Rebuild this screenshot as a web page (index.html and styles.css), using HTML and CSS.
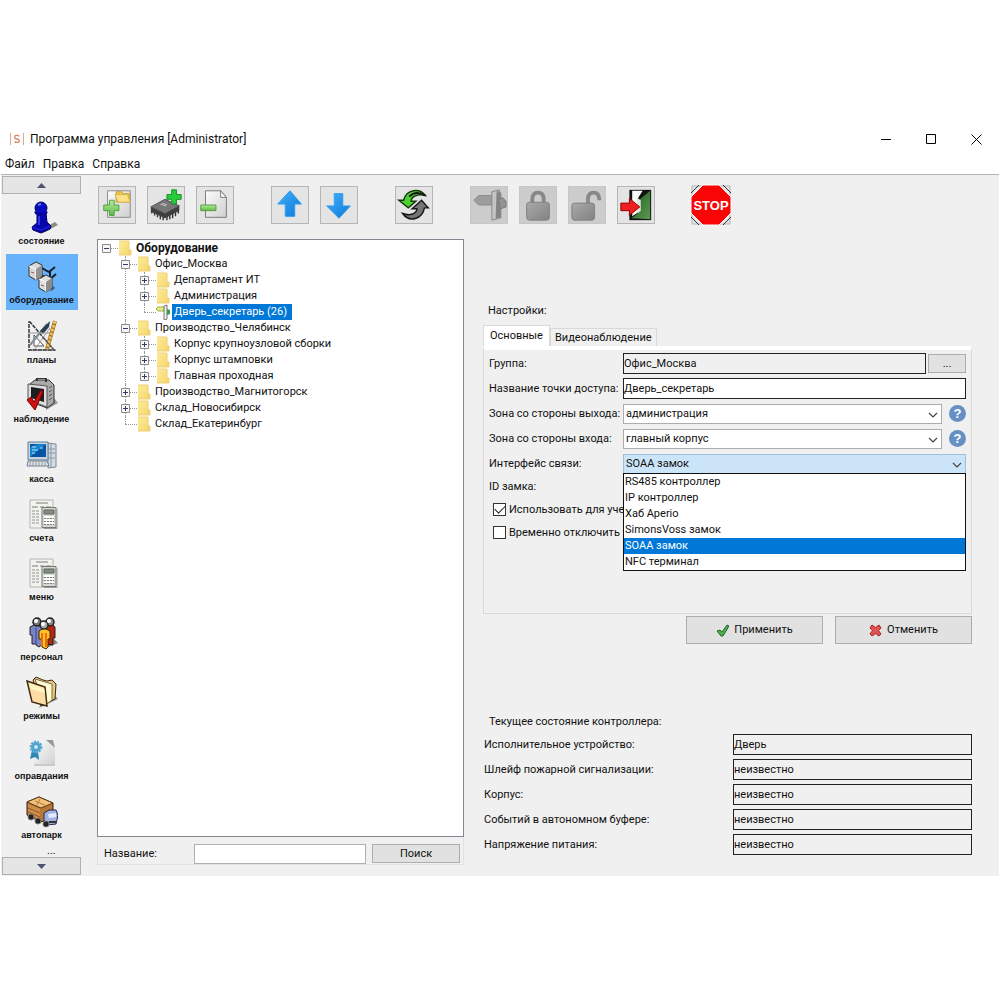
FILE: index.html
```html
<!DOCTYPE html>
<html lang="ru">
<head>
<meta charset="utf-8">
<title>Программа управления [Administrator]</title>
<link rel="stylesheet" href="styles.css">
</head>
<body>
<svg class="defs" width="0" height="0" aria-hidden="true">
  <defs>
    <linearGradient id="g-page" x1="0" y1="0" x2="1" y2="1"><stop offset="0" stop-color="#fdfdfd"/><stop offset="1" stop-color="#cfcfcf"/></linearGradient>
    <linearGradient id="g-green" x1="0" y1="0" x2="0" y2="1"><stop offset="0" stop-color="#b4eb9c"/><stop offset="1" stop-color="#5cbb48"/></linearGradient>
    <linearGradient id="g-blue" x1="0" y1="0" x2="1" y2="1"><stop offset="0" stop-color="#45b0fb"/><stop offset="1" stop-color="#0a78d8"/></linearGradient>
    <linearGradient id="g-gray" x1="0" y1="0" x2="1" y2="1"><stop offset="0" stop-color="#a9a9a9"/><stop offset="1" stop-color="#828282"/></linearGradient>
    <linearGradient id="g-door" x1="0" y1="0" x2="1" y2="1"><stop offset="0" stop-color="#1c5a22"/><stop offset="1" stop-color="#5c9a50"/></linearGradient>
    <linearGradient id="g-folder" x1="0" y1="0" x2="1" y2="1"><stop offset="0" stop-color="#fdeb9c"/><stop offset="1" stop-color="#f6d766"/></linearGradient>
    <symbol id="folder" viewBox="0 0 14 16">
      <path d="M1 1h10v9h2v5H1z" fill="url(#g-folder)"/>
      <path d="M1 1h10v9M1 15h12v-5h-2v5" fill="none" stroke="#ecd078"/>
    </symbol>
    <symbol id="chevron" viewBox="0 0 10 6"><path d="M1 1l4 4 4-4" fill="none" stroke="#444" stroke-width="1.2"/></symbol>
    <symbol id="plus" viewBox="0 0 9 9"><path d="M.5.5h8v8h-8z" fill="#f6f6f6" stroke="#8a8a8a"/><path d="M2 4.500h5M4.500 2v5" stroke="#333a6a"/></symbol>
    <symbol id="minus" viewBox="0 0 9 9"><path d="M.5.5h8v8h-8z" fill="#f6f6f6" stroke="#8a8a8a"/><path d="M2 4.500h5" stroke="#333a6a"/></symbol>
    <symbol id="bill" viewBox="0 0 32 34">
      <path d="M4 3h23v28H4z" fill="#f2f2ee" stroke="#b4b6b0"/>
      <path d="M10 6h12M6 10h6M14 10h4M20 10h5" stroke="#b5b8b2" stroke-width="2"/>
      <path d="M6 14h8M6 17h8M6 20h8M6 23h8M6 26h8" stroke="#bfc2bd" stroke-width="2" stroke-dasharray="3 1"/>
      <path d="M16 10.500h14v20H16z" fill="#d5d8d2" stroke="#747a72"/>
      <path d="M18 13h10v4H18z" fill="#84907f" stroke="#5c665a"/>
      <path d="M18 20h10M18 23h10M18 26h10" stroke="#fff" stroke-width="2"/>
      <path d="M18 21.500h10M18 24.500h10M18 27.500h10" stroke="#7a8078" stroke-dasharray="2 1"/>
      <path d="M18 31.500h13V12" fill="none" stroke="#999"/>
    </symbol>
  </defs>
</svg>

<div class="window">
  <header class="titlebar">
    <svg class="logo" width="16" height="14" viewBox="0 0 16 14" aria-hidden="true"><path d="M1.500 1v12M14.500 1v12" stroke="#e0a68c"/><path d="M10.500 4Q6 2.500 5.800 4.800T8 7q2.600.5 2.200 2.300T5.500 10" fill="none" stroke="#d4835f" stroke-width="1.300"/></svg>
    <h1>Программа управления [Administrator]</h1>
    <div class="controls">
      <button aria-label="Свернуть"><svg width="11" height="11" viewBox="0 0 11 11"><path d="M0 5.500h10" stroke="#000"/></svg></button>
      <button aria-label="Развернуть"><svg width="11" height="11" viewBox="0 0 11 11"><path d="M.5.5h9v9h-9z" fill="none" stroke="#000"/></svg></button>
      <button aria-label="Закрыть"><svg width="11" height="11" viewBox="0 0 11 11"><path d="M.5.5l10 10M10.500.5l-10 10" stroke="#000"/></svg></button>
    </div>
  </header>
  <nav class="menubar"><a href="#">Файл</a><a href="#">Правка</a><a href="#">Справка</a></nav>

  <div class="body">
    <aside class="sidebar">
      <button class="scroll" aria-label="Вверх"><svg width="9" height="5" viewBox="0 0 9 5"><path d="M0 5L4.500 0 9 5z" fill="#4c5472"/></svg></button>
      <nav class="modules">
        <a href="#"><svg viewBox="0 0 32 34"><path d="M17 33L32 25l-3-3-9 5z" fill="#8e8e80"/><path d="M11 13h9l1 9 4 4-1 3-9 4-8-3-1-3 5-4z" fill="#0707ad" stroke="#000060"/><path d="M6 27l9 3 9-4M8 12l8 3 6-3" fill="none" stroke="#2929e8"/><circle cx="15" cy="8" r="6" fill="#0a0ac0" stroke="#000060"/><path d="M9 11l6 3 6-3v3l-6 2-6-2z" fill="#0404a0"/><path d="M12 5l3-1" stroke="#5b7bff" stroke-width="2"/><path d="M13 16v9" stroke="#3434f0" stroke-width="2"/></svg>состояние</a>
        <a href="#" class="current"><svg viewBox="0 0 32 34"><path d="M14 8l9 5 6-5M14 15l9 6 7-6M24 12v8" fill="none" stroke="#14202c" stroke-width="2"/><path d="M3 7l7-4 6 3v11l-6 4-7-4z" fill="#d9d9d9" stroke="#333"/><path d="M3 7l7 3v11" fill="none" stroke="#fff"/><path d="M10 10l6-4v11l-6 4z" fill="#929292"/><path d="M13 20l7-4 6 3v10l-6 4-7-4z" fill="#dedede" stroke="#333"/><path d="M13 20l7 3v10" fill="none" stroke="#fff"/><path d="M20 23l6-4v10l-6 4z" fill="#8c8c8c"/><path d="M5 13l3 1M15 26l3 1" stroke="#a35252"/><path d="M24 33l5-4-2-2z" fill="#345878"/></svg>оборудование</a>
        <a href="#"><svg viewBox="0 0 32 34"><path d="M3 3h1l24 28H3z" fill="none" stroke="#333" stroke-width="1.500" stroke-dasharray="4 1"/><path d="M8 16l10 11H8z" fill="#fff" stroke="#555"/><path d="M21 5L4 26" stroke="#7d8d99" stroke-width="2"/><path d="M24 2l-1 6-6 7-3-3z" fill="#254057"/><path d="M2 14h24M9 30L24 9" stroke="#999"/><path d="M29 2l-8 28" stroke="#8e671f" stroke-width="4"/><path d="M29 2l-8 28" stroke="#edbd5a" stroke-width="3" stroke-dasharray="3 1"/><path d="M17 18l11 13M2 31h28" stroke="#555"/></svg>планы</a>
        <a href="#"><svg viewBox="0 0 32 34"><path d="M20 32l12-7-4-5-8 5z" fill="#9a9a92"/><path d="M4 6l5-4h14l5 5v18l-7 5L3 23z" fill="#aaa" stroke="#333"/><path d="M11 3V0h9v4" fill="none" stroke="#333" stroke-width="2"/><path d="M2 6l19 2v21L2 22z" fill="#ddd" stroke="#555"/><path d="M5 9l13 2v13L5 20z" fill="#1d1d22"/><path d="M23 10l3-2M23 14l3-2M23 18l3-2M23 22l3-2" stroke="#555"/><path d="M1 22l4-3 3 5L15 12l2 2-8 18z" fill="#d01010" stroke="#700"/></svg>наблюдение</a>
        <a href="#"><svg viewBox="0 0 32 34"><path d="M22 5l8 1v23l-8 1z" fill="#d4dbe3" stroke="#7c8a98"/><path d="M25 6v23M23 11h6M23 15h6M23 20h6" stroke="#8897a6"/><path d="M2 4h20v18H2z" fill="#c7d4df" stroke="#657d92"/><path d="M4 6h16v13H4z" fill="#0754a2"/><path d="M4 19V9l8-3h8z" fill="#1684cd"/><path d="M6 9h4M6 12h6M6 15h3M14 10h3" stroke="#b8e1ff"/><path d="M2 23h19l2 5H1z" fill="#e0e4e8" stroke="#708090"/><path d="M3 25h17M3 27h18" stroke="#8d9aa6" stroke-dasharray="2 1"/></svg>касса</a>
        <a href="#"><svg><use href="#bill"/></svg>счета</a>
        <a href="#"><svg><use href="#bill"/></svg>меню</a>
        <a href="#"><svg viewBox="0 0 32 34"><path d="M20 32l12-5-5-5z" fill="#88887c"/><path d="M4 11l6-3 7 4v16l-4 3-3-2v-1H6V19H4z" fill="#7784c5" stroke="#222"/><path d="M20 10l6-2 3 3v11h-2v7l-7-1z" fill="#b62711" stroke="#222"/><path d="M13 15l5-3 6 3v8h-2v8l-2 2-4-2v-8h-3z" fill="#ffc22b" stroke="#3c2600"/><path d="M16 17v13M20 17v14" stroke="#f06c08" stroke-width="2"/><circle cx="11" cy="6" r="4" fill="#777" stroke="#222" stroke-width="1.500"/><circle cx="24" cy="6" r="4" fill="#888" stroke="#222" stroke-width="1.500"/><circle cx="18" cy="9" r="4" fill="#aaa" stroke="#222" stroke-width="1.500"/><circle cx="10" cy="5" r="2" fill="#fff"/><circle cx="23" cy="5" r="2" fill="#fff"/><circle cx="17" cy="8" r="2" fill="#fff"/><path d="M10 12v16" stroke="#3a4690"/></svg>персонал</a>
        <a href="#"><svg viewBox="0 0 32 34"><path d="M13 33l19-9-4-5-12 6z" fill="#9a9a8f"/><path d="M7 5l3-3 7 3 4 1 5-1 4 4-1 15-14 7z" fill="#e8c887" stroke="#3b2b12"/><path d="M9 4l17 5v16l-8 6z" fill="#fffbd5" stroke="#7d6b40"/><path d="M1 6l18 6 2 19L6 27z" fill="#ffdca5" stroke="#3b2b12" stroke-width="1.500"/><path d="M3 8l15 6 1 4-14-4z" fill="#fff7bd"/></svg>режимы</a>
        <a href="#"><svg viewBox="0 0 32 34"><path d="M8 6h13l8 8v17H8z" fill="url(#g-page)"/><path d="M8 29h21v2H8z" fill="#c8cacb"/><path d="M20 5l9 8-2-8z" fill="#92989c"/><path d="M6 15L4 24l5-2 4 3-1-10z" fill="#2f86b3"/><circle cx="10" cy="12" r="5" fill="#4ba2cb" stroke="#5fabd0" stroke-width="3" stroke-dasharray="2 1"/><circle cx="10" cy="12" r="2" fill="#c9e8f4"/></svg>оправдания</a>
        <a href="#"><svg viewBox="0 0 32 34"><path d="M1 8l12-5 14 6v15L15 28 1 21z" fill="#b77836" stroke="#34200c"/><path d="M1 8l14 6 12-5-14-6z" fill="#f3c27a" stroke="#5b3814"/><path d="M9 7l10 4M14 5l-3 6" stroke="#b57b3e"/><path d="M2 10l12 5v11L2 20z" fill="#cf8d49"/><path d="M2 14l12 5M2 18l12 5" stroke="#8f5928"/><path d="M18 19l5-3h7l2 5-2 9-9 1-3-4z" fill="#a3b2e2" stroke="#222b4b"/><path d="M22 20l8-1v4l-7 1z" fill="#e2edff"/><path d="M23 28h7" stroke="#333" stroke-width="2"/><circle cx="5" cy="23" r="3" fill="#222" stroke="#777"/><circle cx="12" cy="27" r="3" fill="#222" stroke="#777"/><circle cx="20" cy="30" r="3" fill="#222" stroke="#777"/></svg>автопарк</a>
      </nav>
      <div class="more">...</div>
      <button class="scroll" aria-label="Вниз"><svg width="9" height="5" viewBox="0 0 9 5"><path d="M0 0l4.500 5L9 0z" fill="#4c5472"/></svg></button>
    </aside>

    <main class="main">
      <div class="toolbar">
        <div class="group">
          <button class="tool" aria-label="Добавить группу"><svg viewBox="0 0 38 38"><path d="M9 4h24v28H9z" fill="url(#g-page)" stroke="#888"/><path d="M18 5h6l2 2h6v9H18z" fill="#ecc94e" stroke="#c2a03a"/><path d="M17 8h13l3 8H20z" fill="#fbe287" stroke="#d4b350"/><path d="M11 14h5v5h5v6h-5v5h-5v-5H5v-6h6z" fill="url(#g-green)" stroke="#4e9c3e"/></svg></button>
          <button class="tool" aria-label="Добавить устройство"><svg viewBox="0 0 38 38"><path d="M4 22v6M7 24v6M10 26v6M13 28v6M16 30v5M20 30v5M23 28v6M26 27v6M29 25v6M32 22v6" stroke="#333" stroke-width="1.500"/><path d="M3 21v5l15 7 15-8v-6l-15 9z" fill="#3d3d3d"/><path d="M3 21l15-8 15 7-15 8z" fill="#767676" stroke="#4b4b4b"/><path d="M13 18l6 2M15 17l5 2" stroke="#c5c5c5"/><path d="M25 3h5v5h5v5h-5v5h-5v-5h-5V8h5z" fill="#27cc3d" stroke="#118f22"/></svg></button>
          <button class="tool" aria-label="Удалить"><svg viewBox="0 0 38 38"><path d="M9 4h16l6 7v21H9z" fill="url(#g-page)" stroke="#777"/><path d="M25 4v7h6z" fill="#fff" stroke="#777"/><path d="M4 19h16v6H4z" fill="url(#g-green)" stroke="#4e9c3e"/></svg></button>
        </div>
        <div class="group">
          <button class="tool" aria-label="Поднять"><svg viewBox="0 0 38 38"><path d="M19 4l12 14h-7v13H14V18H6z" fill="url(#g-blue)" stroke="#2f9bea"/></svg></button>
          <button class="tool" aria-label="Опустить"><svg viewBox="0 0 38 38"><path d="M14 7h9v13h8L19 33 6 20h8z" fill="url(#g-blue)" stroke="#2f9bea"/></svg></button>
        </div>
        <div class="group">
          <button class="tool" aria-label="Обновить"><svg viewBox="0 0 38 38"><path d="M31 9C25 1 11 2 8 14H3l10 8 8-7h-5c0-5 7-8 15-6z" fill="#4fd02f" stroke="#14380c" stroke-width="1.500"/><path d="M31 9c-7-4-13-3-17 1" fill="none" stroke="#111" stroke-width="2"/><path d="M7 28c7 10 21 6 23-6h4L27 14l-10 9h5c0 5-7 8-15 5z" fill="#757575" stroke="#181818" stroke-width="1.500"/></svg></button>
        </div>
        <div class="group">
          <button class="tool off" disabled aria-label="Проход"><svg viewBox="0 0 38 38"><path d="M3 14l5-5h14v10H8z" fill="#9d9d9d" stroke="#8c8c8c"/><path d="M22 5l8-2v30l-8 2z" fill="#c4c4c4" stroke="#888"/><path d="M27 4l5 2v27h-6z" fill="#858585"/><path d="M29 14l4-3 4 4v6l-6 2z" fill="#949494" stroke="#777"/></svg></button>
          <button class="tool off" disabled aria-label="Закрыть дверь"><svg viewBox="0 0 38 38"><path d="M13 18v-5q0-7 6-7t6 7v5" fill="none" stroke="#888" stroke-width="4"/><rect x="7" y="16" width="24" height="19" rx="3" fill="url(#g-gray)" stroke="#808080"/></svg></button>
          <button class="tool off" disabled aria-label="Открыть дверь"><svg viewBox="0 0 38 38"><path d="M20 18v-5q0-7 6-7t6 8" fill="none" stroke="#888" stroke-width="4"/><rect x="3" y="17" width="24" height="18" rx="3" fill="url(#g-gray)" stroke="#808080"/></svg></button>
          <button class="tool" aria-label="Выход"><svg viewBox="0 0 38 38"><path d="M12 3h23v32H12z" fill="#111"/><path d="M15 4h11l-5 8v15l-6 4z" fill="#fafafa"/><path d="M14 33l9-7V13l11-9v30z" fill="url(#g-door)"/><path d="M24 14l-3-2v16l3-3z" fill="#dfe8dd"/><path d="M3 17h9v-5l11 9-11 9v-5H3z" fill="#ef1f1f" stroke="#8f0000"/></svg></button>
        </div>
        <div class="group">
          <button class="stop" aria-label="STOP"><svg viewBox="0 0 42 42"><path d="M2 2h38v38H2z" fill="#e4e4e4" stroke="#b5b5b5"/><path d="M13 1h16l12 12v16L29 41H13L1 29V13z" fill="#f80606" stroke="#fff"/><path d="M1 9L9 1M33 1l8 8M41 33l-8 8M9 41l-8-8" stroke="#333"/><text x="21" y="26" text-anchor="middle">STOP</text></svg></button>
        </div>
      </div>

      <div class="columns">
        <section class="left">
          <div class="tree-box">
            <ul class="tree">
              <li>
                <div class="row root"><button aria-label="Свернуть"><svg><use href="#minus"/></svg></button><svg class="folder"><use href="#folder"/></svg><span>Оборудование</span></div>
                <ul>
                  <li>
                    <div class="row"><button aria-label="Свернуть"><svg><use href="#minus"/></svg></button><svg class="folder"><use href="#folder"/></svg><span>Офис_Москва</span></div>
                    <ul>
                      <li><div class="row"><button aria-label="Развернуть"><svg><use href="#plus"/></svg></button><svg class="folder"><use href="#folder"/></svg><span>Департамент ИТ</span></div></li>
                      <li><div class="row"><button aria-label="Развернуть"><svg><use href="#plus"/></svg></button><svg class="folder"><use href="#folder"/></svg><span>Администрация</span></div></li>
                      <li><div class="row leaf"><svg class="folder" viewBox="0 0 14 16"><path d="M0 5l2-2h6v4H2z" fill="#e0f080" stroke="#9ab53e"/><path d="M8 2l3-1v14l-3 1z" fill="#eee" stroke="#777"/><path d="M11 5l3 1v4l-3 1z" fill="#32a046"/></svg><span class="selected">Дверь_секретарь (26)</span></div></li>
                    </ul>
                  </li>
                  <li>
                    <div class="row"><button aria-label="Свернуть"><svg><use href="#minus"/></svg></button><svg class="folder"><use href="#folder"/></svg><span>Производство_Челябинск</span></div>
                    <ul>
                      <li><div class="row"><button aria-label="Развернуть"><svg><use href="#plus"/></svg></button><svg class="folder"><use href="#folder"/></svg><span>Корпус крупноузловой сборки</span></div></li>
                      <li><div class="row"><button aria-label="Развернуть"><svg><use href="#plus"/></svg></button><svg class="folder"><use href="#folder"/></svg><span>Корпус штамповки</span></div></li>
                      <li><div class="row"><button aria-label="Развернуть"><svg><use href="#plus"/></svg></button><svg class="folder"><use href="#folder"/></svg><span>Главная проходная</span></div></li>
                    </ul>
                  </li>
                  <li><div class="row"><button aria-label="Развернуть"><svg><use href="#plus"/></svg></button><svg class="folder"><use href="#folder"/></svg><span>Производство_Магнитогорск</span></div></li>
                  <li><div class="row"><button aria-label="Развернуть"><svg><use href="#plus"/></svg></button><svg class="folder"><use href="#folder"/></svg><span>Склад_Новосибирск</span></div></li>
                  <li><div class="row leaf"><svg class="folder"><use href="#folder"/></svg><span>Склад_Екатеринбург</span></div></li>
                </ul>
              </li>
            </ul>
          </div>
          <form class="search">
            <label for="q">Название:</label>
            <input id="q" type="text">
            <button type="button" class="btn">Поиск</button>
          </form>
        </section>

        <section class="right">
          <form class="settings">
            <h2>Настройки:</h2>
            <div class="tabs"><button type="button" class="tab active">Основные</button><button type="button" class="tab">Видеонаблюдение</button></div>
            <div class="pane">
              <div class="field"><label for="group">Группа:</label><input id="group" class="text shaded" type="text" value="Офис_Москва" readonly><button type="button" class="btn dots">...</button></div>
              <div class="field"><label for="name">Название точки доступа:</label><input id="name" class="text" type="text" value="Дверь_секретарь"></div>
              <div class="field"><label for="out">Зона со стороны выхода:</label><div class="combo"><select id="out"><option>администрация</option></select><svg class="arrow"><use href="#chevron"/></svg></div><button type="button" class="help" aria-label="Справка">?</button></div>
              <div class="field"><label for="in">Зона со стороны входа:</label><div class="combo"><select id="in"><option>главный корпус</option></select><svg class="arrow"><use href="#chevron"/></svg></div><button type="button" class="help" aria-label="Справка">?</button></div>
              <div class="field"><label for="link">Интерфейс связи:</label>
                <div class="combo open"><select id="link"><option>SOAA замок</option></select><svg class="arrow"><use href="#chevron"/></svg>
                  <ul class="list" role="listbox">
                    <li role="option">RS485 контроллер</li>
                    <li role="option">IP контроллер</li>
                    <li role="option">Хаб Aperio</li>
                    <li role="option">SimonsVoss замок</li>
                    <li role="option" aria-selected="true" class="picked">SOAA замок</li>
                    <li role="option">NFC терминал</li>
                  </ul>
                </div>
              </div>
              <div class="field short"><span class="caption">ID замка:</span></div>
              <label class="check"><input type="checkbox" checked><span>Использовать для уче</span></label>
              <label class="check"><input type="checkbox"><span>Временно отключить т</span></label>
            </div>
            <div class="actions">
              <button type="button" class="btn"><svg width="13" height="13" viewBox="0 0 13 13"><path d="M1 7l3-1 2 2 5-7 2 1-6 10H5z" fill="#4fae50" stroke="#25682c"/></svg>Применить</button>
              <button type="button" class="btn"><svg width="13" height="13" viewBox="0 0 13 13"><path d="M3 1l3.500 2.500L10 1l2 3-2.500 2.500L12 10l-2 2-3.500-2.500L3 12l-2-2 2.500-3.500L1 4z" fill="#e25252" stroke="#a32222"/></svg>Отменить</button>
            </div>
          </form>

          <div class="status">
            <h2>Текущее состояние контроллера:</h2>
            <div class="state"><label for="s1">Исполнительное устройство:</label><input id="s1" class="text shaded" type="text" value="Дверь" readonly></div>
            <div class="state"><label for="s2">Шлейф пожарной сигнализации:</label><input id="s2" class="text shaded" type="text" value="неизвестно" readonly></div>
            <div class="state"><label for="s3">Корпус:</label><input id="s3" class="text shaded" type="text" value="неизвестно" readonly></div>
            <div class="state"><label for="s4">Событий в автономном буфере:</label><input id="s4" class="text shaded" type="text" value="неизвестно" readonly></div>
            <div class="state"><label for="s5">Напряжение питания:</label><input id="s5" class="text shaded" type="text" value="неизвестно" readonly></div>
          </div>
        </section>
      </div>
    </main>
  </div>
</div>
</body>
</html>
```
FILE: styles.css
```css
* { box-sizing: border-box; }
body {
  margin: 0;
  min-height: 100vh;
  padding: 124px 1px;
  display: flex;
  flex-direction: column;
  background: #fff;
  color: #111;
  font: 11px/16px Roboto, sans-serif;
}
.defs { position: absolute; }
button, input, select { font: inherit; color: inherit; margin: 0; padding: 0; border-radius: 0; }
button { border: 0; background: none; }
a { color: inherit; text-decoration: none; }
h1, h2 { margin: 0; font-size: inherit; font-weight: normal; }
ul { margin: 0; padding: 0; list-style: none; }
svg { display: block; flex: none; }

.window { flex: 1; display: flex; flex-direction: column; }
.titlebar { display: flex; align-items: center; height: 30px; padding-left: 8px; gap: 5px; font-size: 12px; }
.controls { margin-left: auto; display: flex; }
.controls button { width: 45px; height: 30px; display: grid; place-items: center; }
.menubar { display: flex; gap: 8px; height: 20px; padding: 2px 4px; font-size: 12px; }

.body { flex: 1; display: flex; background: #f0f0f0; border-top: 1px solid #b4b4b4; }
.sidebar { width: 79px; margin: 1px 16px 1px 1px; display: flex; flex-direction: column; }
.scroll { height: 18px; display: grid; place-items: center; background: #e5e5e5; border: 1px solid #b0b0b0; }
.modules { flex: 1; display: flex; flex-direction: column; justify-content: space-between; align-items: center; padding-top: 1px; }
.modules a {
  width: 72px;
  height: 56px;
  padding-top: 5px;
  display: flex;
  flex-direction: column;
  align-items: center;
  font: bold 9px/14px "Liberation Sans", sans-serif;
}
.modules svg { width: 32px; height: 34px; }
.modules .current { background: #66b2fb; }
.more { height: 12px; line-height: 12px; padding-left: 45px; }

.main { flex: 1; min-width: 0; padding: 11px 27px 11px 0; display: flex; flex-direction: column; }
.toolbar { display: flex; gap: 37px; padding-left: 1px; height: 38px; margin-bottom: 15px; align-items: center; }
.group { display: flex; gap: 11px; }
.tool { width: 38px; height: 38px; border: 1px solid #b5b5b5; background: #e4e4e4; }
.tool svg { width: 36px; height: 36px; }
.tool.off { background: #ccc; border-color: #c6c6c6; }
.stop { width: 42px; height: 42px; margin-left: -2px; }
.stop svg { width: 42px; height: 42px; }
.stop text { font: bold 13px "Liberation Sans", sans-serif; fill: #fff; }

.columns { flex: 1; display: grid; grid-template-columns: 367fr 489fr; gap: 19px; }
.left { display: flex; flex-direction: column; min-width: 0; }
.tree-box { flex: 1; background: #fff; border: 1px solid #828790; padding: 0 4px; }
.row { display: flex; align-items: center; height: 16px; position: relative; }
.row button { width: 9px; height: 9px; margin-right: 7px; }
.row button svg { width: 9px; height: 9px; }
.row::before { content: ""; position: absolute; left: 9px; width: 7px; border-top: 1px dotted #999; }
.row.leaf { padding-left: 16px; }
.row.leaf::before { left: 4px; width: 12px; }
.row span { margin-left: 2px; padding: 0 2px; white-space: nowrap; }
.row.root span { font-size: 12px; font-weight: bold; }
.folder { width: 14px; height: 16px; }
.row .selected { background: #0078d7; color: #fff; padding-right: 5px; }
.tree li li { position: relative; margin-left: 19px; }
.tree li li::before { content: ""; position: absolute; left: 4px; top: 0; bottom: 0; border-left: 1px dotted #999; }
.tree li li:last-child::before { bottom: auto; height: 8px; }

.search { display: flex; align-items: center; height: 28px; border: 1px solid #e2e2e2; border-top: 0; padding: 6px 3px 0 6px; }
.search label { width: 90px; }
.search input { flex: 1; min-width: 0; height: 20px; border: 1px solid #b0b0b0; background: #fff; margin-right: 6px; }
.search .btn { width: 88px; height: 19px; }
.btn { background: #e1e1e1; border: 1px solid #adadad; }

.right { min-width: 0; padding-top: 64px; }
.settings h2, .status h2 { padding-left: 5px; }
.tabs { display: flex; align-items: flex-end; margin-top: 6px; }
.tab { height: 18px; padding: 0 4px; background: #f0f0f0; border: 1px solid #d9d9d9; border-bottom: 0; white-space: nowrap; }
.tab.active { height: 21px; padding: 0 6px; background: #fff; }
.pane { height: 268px; border: 1px solid #d9d9d9; border-top: 4px solid #fff; padding: 3px 5px; }
.field { display: flex; align-items: center; height: 21px; margin-bottom: 4px; }
.field.short { height: 18px; margin-bottom: 2px; }
.field label { width: 134px; white-space: nowrap; }
.text { flex: 1; min-width: 0; height: 21px; border: 1px solid #222; background: #fff; }
.text.shaded { background: #f0f0f0; }
.dots { width: 38px; height: 19px; margin-left: 2px; line-height: 14px; }
.combo { flex: 1; position: relative; }
.combo select { display: block; width: 100%; height: 20px; appearance: none; background: #fff; border: 1px solid #adadad; padding-left: 2px; }
.combo.open select { background: #cce4f7; border-color: #9dc0dc; }
.arrow { position: absolute; right: 4px; top: 8px; width: 10px; height: 6px; }
.help { width: 17px; height: 17px; margin-left: 7px; border-radius: 50%; background: #6690c4; color: #fff; font: bold 13px/17px "Liberation Sans", sans-serif; }
.list { position: absolute; z-index: 1; left: 0; right: 0; top: 19px; background: #fff; border: 1px solid #111; }
.list li { padding-left: 1px; }
.list .picked { background: #0078d7; color: #fff; }
.check { display: flex; align-items: center; height: 23px; padding-left: 4px; white-space: nowrap; }
.check input { flex: none; appearance: none; width: 13px; height: 13px; margin-right: 3px; border: 1px solid #333; background: #fff; display: grid; place-items: center; }
.check input:checked::before { content: ""; width: 9px; height: 5px; border: solid #222; border-width: 0 0 1px 1px; rotate: -45deg; margin-bottom: 3px; }
.actions { display: flex; justify-content: flex-end; gap: 12px; margin-top: 2px; }
.actions .btn { width: 137px; height: 28px; display: flex; align-items: center; justify-content: center; gap: 5px; }

.status { margin-top: 70px; padding-left: 1px; }
.status h2 { margin-bottom: 4px; }
.state { display: flex; align-items: center; margin-bottom: 4px; }
.state label { flex: 250; white-space: nowrap; }
.state .text { flex: 238; }
```
